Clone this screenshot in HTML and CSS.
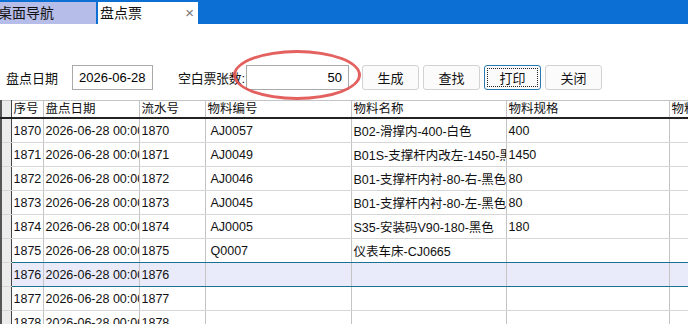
FILE: index.html
```html
<!DOCTYPE html>
<html lang="zh-CN">
<head>
    <meta charset="UTF-8">
    <title>盘点票</title>
    <link rel="stylesheet" href="styles.css">
</head>
<body>
    <div class="tab-bar">
        <div class="tab">桌面导航</div>
        <div class="tab active">盘点票<span class="tab-close">×</span></div>
    </div>

    <div class="toolbar">
        <label class="lbl">盘点日期</label>
        <input class="field date-field" type="text" value="2026-06-28">
        <label class="lbl lbl-count">空白票张数:</label>
        <div class="count-wrap">
            <input class="field count-field" type="text" value="50">
            <span class="mark"></span>
        </div>
        <button class="btn">生成</button>
        <button class="btn">查找</button>
        <button class="btn focused">打印</button>
        <button class="btn">关闭</button>
    </div>

    <table class="grid">
        <colgroup>
            <col style="width:10px">
            <col style="width:32px">
            <col style="width:96px">
            <col style="width:66px">
            <col style="width:146px">
            <col style="width:155px">
            <col style="width:163px">
            <col style="width:80px">
        </colgroup>
        <thead>
            <tr>
                <th class="gutter"></th>
                <th>序号</th>
                <th>盘点日期</th>
                <th>流水号</th>
                <th>物料编号</th>
                <th>物料名称</th>
                <th>物料规格</th>
                <th>物料</th>
            </tr>
        </thead>
        <tbody id="rows"></tbody>
    </table>

    <script>
        const data = [
            ['1870', 'AJ0057', 'B02-滑撑内-400-白色', '400'],
            ['1871', 'AJ0049', 'B01S-支撑杆内改左-1450-黑色', '1450'],
            ['1872', 'AJ0046', 'B01-支撑杆内衬-80-右-黑色', '80'],
            ['1873', 'AJ0045', 'B01-支撑杆内衬-80-左-黑色', '80'],
            ['1874', 'AJ0005', 'S35-安装码V90-180-黑色', '180'],
            ['1875', 'Q0007', '仪表车床-CJ0665', ''],
            ['1876', '', '', ''],
            ['1877', '', '', ''],
            ['1878', '', '', '']
        ];
        const tbody = document.getElementById('rows');
        data.forEach(d => {
            const row = document.createElement('tr');
            if (d[0] === '1876') row.classList.add('current');
            if (d[0] === '1875') row.classList.add('before-current');
            row.innerHTML = `
                <td class="gutter"></td>
                <td>${d[0]}</td>
                <td>2026-06-28 00:00:00</td>
                <td>${d[0]}</td>
                <td class="pad">${d[1]}</td>
                <td>${d[2]}</td>
                <td>${d[3]}</td>
                <td></td>
            `;
            tbody.appendChild(row);
        });
    </script>
</body>
</html>
```

FILE: styles.css
```css
body {
    margin: 0;
    font-family: 'Liberation Sans', 'Noto Sans CJK SC', sans-serif;
    font-size: 12.5px;
    color: #111;
    background: #fff;
    overflow: hidden;
    width: 688px;
    height: 324px;
}
.tab-bar {
    display: flex;
    align-items: flex-end;
    gap: 2px;
    height: 24px;
    background-color: #0b6fd3;
}
.tab {
    width: 96px;
    height: 22px;
    line-height: 22px;
    font-size: 14px;
    color: #111;
    background-color: #b6bde8;
    text-indent: -2px;
    white-space: nowrap;
    overflow: hidden;
}
.tab.active {
    position: relative;
    width: 100px;
    background-color: #fff;
    text-indent: 2px;
}
.tab-close {
    position: absolute;
    right: 4px;
    top: 0;
    font-size: 15px;
    color: #777;
}
.toolbar {
    display: flex;
    align-items: center;
    height: 28px;
    margin-top: 39px;
    margin-bottom: 9px;
}
.lbl {
    margin-left: 6px;
    width: 66px;
    font-size: 13px;
    white-space: nowrap;
}
.lbl-count {
    margin-left: 25px;
    width: 68px;
    letter-spacing: -0.3px;
}
.field {
    height: 25px;
    box-sizing: border-box;
    border: 1px solid #a9a9a9;
    font-family: inherit;
    font-size: 13px;
    padding: 0 6px;
    margin: 0;
    outline: none;
}
.date-field {
    width: 81px;
}
.count-wrap {
    position: relative;
}
.count-field {
    width: 103px;
    text-align: right;
}
.mark {
    position: absolute;
    left: -13px;
    top: -15px;
    width: 128px;
    height: 50px;
    border: 3px solid #e0504e;
    border-radius: 50%;
    box-sizing: border-box;
    opacity: 0.9;
}
.btn {
    width: 57px;
    height: 25px;
    margin-left: 4px;
    border: 1px solid #d2d2d2;
    border-radius: 3px;
    background: #fbfbfb;
    font-family: inherit;
    font-size: 13px;
    color: #111;
    padding: 0;
}
.btn:first-of-type {
    margin-left: 13px;
}
.btn.focused {
    border: 1px solid #2a7ab0;
    outline: 1px dotted #222;
    outline-offset: -4px;
}
.grid {
    table-layout: fixed;
    border-collapse: collapse;
    width: 748px;
    white-space: nowrap;
}
.grid th,
.grid td {
    height: 23px;
    padding: 0 0 0 2px;
    border-right: 1px solid #c4c4c4;
    border-bottom: 1px solid #d6d6d6;
    overflow: hidden;
    text-align: left;
    font-weight: normal;
}
.grid th {
    height: 16px;
    line-height: 16px;
    border-top: 1px solid #c4c4c4;
    border-bottom: 2px solid #222;
}
.grid td.pad {
    padding-left: 5px;
}
.grid .gutter {
    background-color: #ececec;
    border-left: 2px solid #555;
    border-right: 1px solid #444;
    padding: 0;
}
.grid tr.before-current td {
    border-bottom-color: #1e7090;
}
.grid tr.current td {
    background-color: #e9ebfa;
    border-bottom: 1px solid #1e7090;
}
.grid tr.current td.gutter,
.grid tr.before-current td.gutter {
    background-color: #ececec;
    border-bottom-color: #d6d6d6;
}
```
